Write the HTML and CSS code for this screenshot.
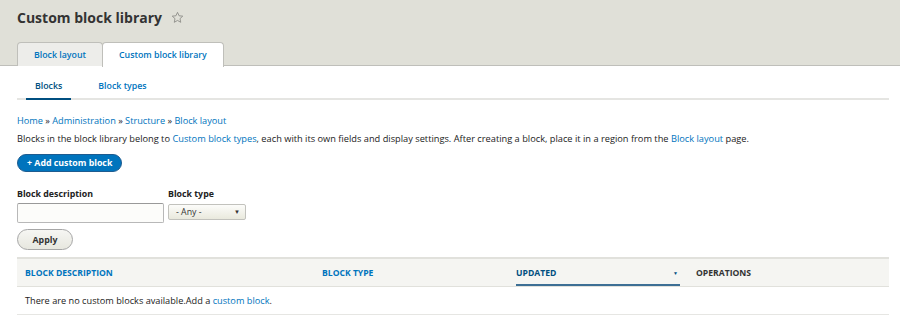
FILE: index.html
```html
<!DOCTYPE html>
<html lang="en">
<head>
    <meta charset="UTF-8">
    <title>Custom block library</title>
    <link rel="stylesheet" href="styles.css">
</head>
<body>
    <header class="page-header">
        <h1 class="page-title">
            Custom block library
            <svg class="star" width="13" height="13" viewBox="0 0 24 24">
                <path d="M12 2.5l2.9 6.3 6.8.7-5.1 4.6 1.4 6.8L12 17.4l-6 3.5 1.4-6.8-5.1-4.6 6.8-.7z" fill="none" stroke="#8a8a85" stroke-width="1.6" stroke-linejoin="round"/>
            </svg>
        </h1>
        <ul class="tabs-primary">
            <li class="tab"><a href="#">Block layout</a></li>
            <li class="tab tab-active"><a href="#">Custom block library</a></li>
        </ul>
    </header>

    <main class="content">
        <ul class="tabs-secondary">
            <li class="subtab subtab-active"><a href="#">Blocks</a></li>
            <li class="subtab"><a href="#">Block types</a></li>
        </ul>

        <nav class="breadcrumb">
            <a href="#">Home</a> » <a href="#">Administration</a> » <a href="#">Structure</a> » <a href="#">Block layout</a>
        </nav>

        <p class="help">Blocks in the block library belong to <a href="#">Custom block types</a>, each with its own fields and display settings. After creating a block, place it in a region from the <a href="#">Block layout</a> page.</p>

        <a href="#" class="button-action">+ Add custom block</a>

        <form class="filters">
            <div class="filter-row">
                <div class="form-item">
                    <label>Block description</label>
                    <input type="text" class="text-input">
                </div>
                <div class="form-item">
                    <label>Block type</label>
                    <div class="select">
                        <span>- Any -</span>
                        <span class="caret">▼</span>
                    </div>
                </div>
            </div>
            <button type="button" class="button">Apply</button>
        </form>

        <table class="listing">
            <thead>
                <tr>
                    <th class="col-desc"><a href="#">Block description</a></th>
                    <th class="col-type"><a href="#">Block type</a></th>
                    <th class="col-updated is-active"><a href="#">Updated <span class="sort">▼</span></a></th>
                    <th class="col-ops">Operations</th>
                </tr>
            </thead>
            <tbody>
                <tr>
                    <td colspan="4">There are no custom blocks available.Add a <a href="#">custom block</a>.</td>
                </tr>
            </tbody>
        </table>
    </main>
</body>
</html>
```

FILE: styles.css
```css
* {
    margin: 0;
    padding: 0;
    box-sizing: border-box;
}

body {
    margin: 0;
    font-family: 'Open Sans', 'Lato', sans-serif;
    font-size: 8.8px;
    color: #222222;
    background-color: #ffffff;
}

a {
    color: #0074bd;
    text-decoration: none;
}

.page-header {
    background-color: #e0e0d8;
    border-bottom: 1px solid #bfbfba;
    padding: 8px 17px 0 17px;
    height: 66px;
}

.page-title {
    font-size: 14px;
    font-weight: bold;
    color: #333333;
    line-height: 20px;
    display: flex;
    align-items: center;
    gap: 9px;
}

.star {
    margin-top: -2px;
}

.tabs-primary {
    list-style: none;
    display: flex;
    margin-top: 14px;
}

.tab {
    height: 24px;
    display: flex;
    align-items: center;
    background-color: #ededea;
    border: 1px solid #bfbfba;
    border-bottom: none;
    border-radius: 4px 4px 0 0;
}

.tab a {
    font-weight: 600;
    padding: 0 16px;
}

.tab-active {
    background-color: #ffffff;
    height: 25px;
    margin-left: -1px;
}

.content {
    padding: 0 11px 0 17px;
}

.tabs-secondary {
    list-style: none;
    display: flex;
    border-bottom: 2px solid #e5e5e2;
    padding-left: 9px;
    height: 34px;
    align-items: flex-end;
}

.subtab {
    margin-bottom: -2px;
}

.subtab a {
    display: block;
    padding: 0 9px 5px 9px;
    line-height: 13px;
    font-weight: 600;
    border-bottom: 2px solid transparent;
}

.subtab-active a {
    color: #004f80;
    border-bottom-color: #004f80;
}

.subtab + .subtab {
    margin-left: 18px;
}

.breadcrumb {
    margin-top: 15px;
    font-size: 9.2px;
    line-height: 12px;
    color: #222222;
}

.help {
    margin-top: 6px;
    font-size: 9.25px;
    line-height: 12px;
}

.button-action {
    display: inline-block;
    margin-top: 9px;
    background-color: #0074bd;
    color: #ffffff;
    font-weight: bold;
    padding: 0 9px;
    height: 18px;
    border-radius: 9px;
    border: 1px solid #1e5c90;
    line-height: 16px;
}

.filters {
    margin-top: 16px;
}

.filter-row {
    display: flex;
    gap: 4px;
}

.form-item {
    display: flex;
    flex-direction: column;
}

.form-item label {
    font-weight: bold;
    line-height: 12px;
    margin-bottom: 3px;
}

.text-input {
    width: 147px;
    height: 20px;
    border: 1px solid #b8b8b8;
    border-top-color: #999999;
    border-radius: 2px;
    background-color: #fcfcfa;
}

.select {
    width: 78px;
    height: 16px;
    margin-top: 1px;
    display: flex;
    align-items: center;
    justify-content: space-between;
    padding: 0 5px 0 7px;
    border: 1px solid #c2c2bd;
    border-radius: 2px;
    background: linear-gradient(#fcfcfa, #e9e9dd);
    color: #333333;
}

.caret {
    font-size: 6px;
}

.button {
    margin-top: 6px;
    width: 56px;
    height: 21px;
    border: 1px solid #a6a6a6;
    border-radius: 11px;
    background: linear-gradient(#f6f6f3, #e7e7df);
    font-family: 'Open Sans', 'Lato', sans-serif;
    font-weight: bold;
    font-size: 8.8px;
    color: #333333;
}

.listing {
    width: 100%;
    margin-top: 7px;
    border-collapse: collapse;
}

.listing thead tr {
    background-color: #f5f5f2;
    border-top: 2px solid #e1e1dc;
    border-bottom: 1px solid #e1e1dc;
}

.listing th {
    text-align: left;
    text-transform: uppercase;
    font-size: 8.6px;
    font-weight: bold;
    color: #333333;
    height: 27px;
    padding: 0 8px;
    vertical-align: middle;
}

.listing th a {
    display: flex;
    justify-content: space-between;
    align-items: center;
}

.col-desc {
    width: 297px;
}

.col-type {
    width: 194px;
}

.col-updated {
    width: 180px;
}

.is-active a {
    color: #004f80;
    height: 27px;
    border-bottom: 2px solid #3d6f95;
    padding-top: 2px;
}

.sort {
    font-size: 5px;
    margin-right: 2px;
}

.listing td {
    height: 28px;
    padding: 0 8px;
    font-size: 9.2px;
    border-bottom: 1px solid #e6e6e3;
}
```
